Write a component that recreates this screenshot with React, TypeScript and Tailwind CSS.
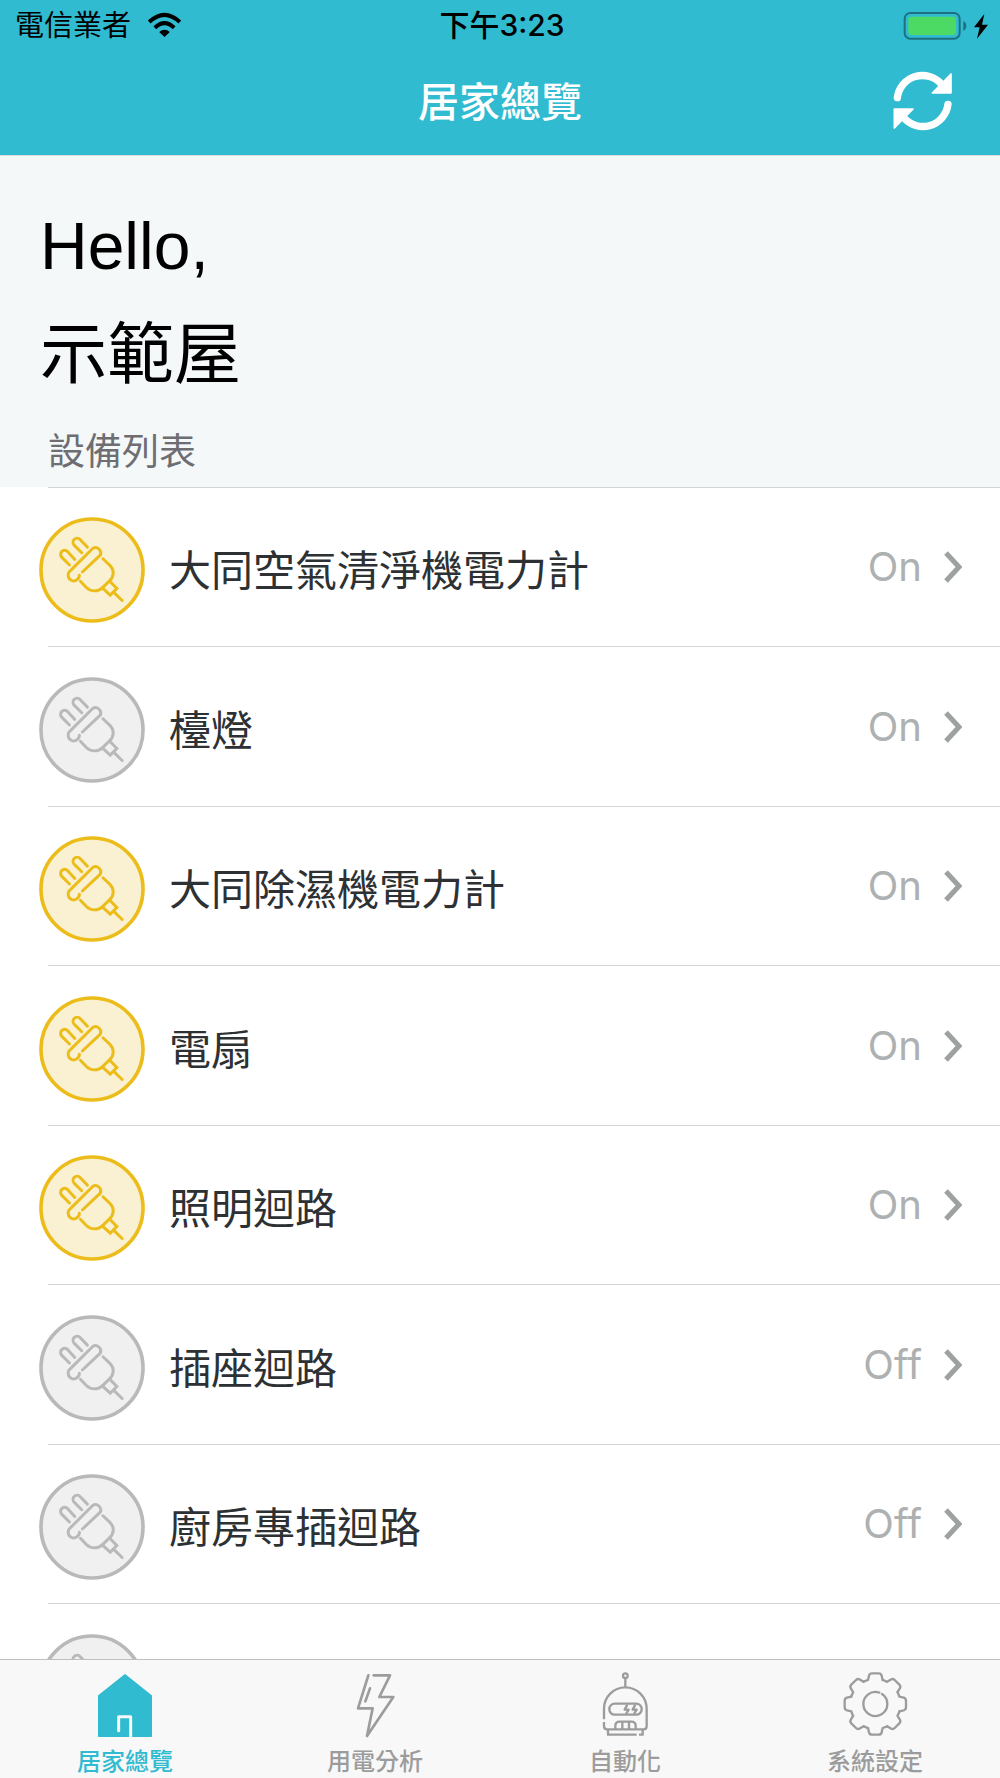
import type { ReactNode } from 'react';

type Device = {
  name: string;
  status?: 'On' | 'Off';
  active: boolean;
};

const devices: Device[] = [
  { name: '大同空氣清淨機電力計', status: 'On', active: true },
  { name: '檯燈', status: 'On', active: false },
  { name: '大同除濕機電力計', status: 'On', active: true },
  { name: '電扇', status: 'On', active: true },
  { name: '照明迴路', status: 'On', active: true },
  { name: '插座迴路', status: 'Off', active: false },
  { name: '廚房專插迴路', status: 'Off', active: false },
  { name: '', active: false },
];

function WifiIcon() {
  return (
    <svg viewBox="441 33 104 78" className="h-[26px] w-[35px]" fill="none" stroke="black" strokeWidth="12">
      <path d="M447 63Q493 20 539 63" />
      <path d="M464 80Q493 53 522 80" />
      <path d="M477 93Q493 80 509 93L493 108Z" fill="black" stroke="none" />
    </svg>
  );
}

function BatteryIcon() {
  return (
    <svg viewBox="1208 28 258 87" className="h-[29px] w-[86px]">
      <rect x="1213" y="34" width="165" height="77" rx="17" fill="none" stroke="#1c7180" strokeWidth="6" />
      <rect x="1224" y="45" width="143" height="55" rx="9" fill="#4cd964" />
      <path d="M1389 58Q1398 63 1398 73T1389 88Z" fill="#1c7180" />
      <path d="M1452 37L1421 77H1438L1430 111L1463 69H1445Z" />
    </svg>
  );
}

function RefreshIcon() {
  return (
    <svg viewBox="36 60 186 186" className="size-[62px]" fill="none" stroke="white" strokeWidth="22" strokeLinecap="round">
      <path d="M52 143A76 76 0 0 1 185 103" />
      <path d="M204 163A76 76 0 0 1 71 203" />
      <path d="M213 72V129H157Z" fill="white" strokeWidth="5" strokeLinejoin="round" />
      <path d="M43 234V177H99Z" fill="white" strokeWidth="5" strokeLinejoin="round" />
    </svg>
  );
}

function PlugIcon({ active }: { active: boolean }) {
  return (
    <svg
      viewBox="56 50 320 320"
      className={active ? 'size-[106px] text-[#ecbd1a]' : 'size-[106px] text-[#b9b9b9]'}
      fill="none"
      stroke="currentColor"
      strokeWidth="9"
      strokeLinecap="round"
      strokeLinejoin="round"
    >
      <circle cx="216" cy="210" r="154" strokeWidth="11" fill={active ? '#faf1d3' : '#f0f0f0'} />
      <path d="M185 158L162 135A12 12 0 0 1 180 118L202 141" />
      <path d="M148 195L125 172A12 12 0 0 1 142 154L164 178" />
      <path d="M178 226A17 17 0 1 1 151 212L218 145A16 16 0 0 1 241 165L187 216" />
      <path d="M249 176L271 197Q281 208 280 220Q279 234 269 243L247 264Q238 273 223 273Q209 273 199 263L181 244" />
      <path d="M247 264L271 286L291 266L269 243" strokeLinejoin="miter" />
      <path d="M284 280L307 302" />
    </svg>
  );
}

function ChevronIcon() {
  return (
    <svg viewBox="0 0 18 32" className="h-8 w-[18px]" fill="none" stroke="#9da1a1" strokeWidth="5">
      <path d="M2 2L15 16L2 30" />
    </svg>
  );
}

function TabIcon({ children }: { children: ReactNode }) {
  return (
    <svg
      viewBox="0 0 201 201"
      className="size-[67px]"
      fill="none"
      stroke="currentColor"
      strokeWidth="8"
      strokeLinecap="round"
      strokeLinejoin="round"
    >
      {children}
    </svg>
  );
}

function HomeIcon() {
  return (
    <TabIcon>
      <path d="M99 11L178 74V196H20V74Z" fill="currentColor" strokeWidth="4" />
      <path d="M80 179V137H116V200" stroke="#f7f7f7" strokeWidth="9" />
    </TabIcon>
  );
}

function BoltIcon() {
  return (
    <TabIcon>
      <path d="M95 13H144L112 78H154L75 195L92 112H48L79 13" />
      <path d="M84 52L70 91" />
    </TabIcon>
  );
}

function RobotIcon() {
  return (
    <TabIcon>
      <g strokeWidth="7" strokeLinecap="butt">
        <circle cx="100" cy="14" r="7" />
        <path d="M100 22V48" />
        <path d="M36 145V113A64 64 0 0 1 164 113V166Q164 175 155 175H45Q36 175 36 166V153" />
        <rect x="52" y="98" width="97" height="33" rx="16" />
        <path d="M106 101L98 116H110L102 129M130 101L122 116H134L126 129" />
        <path d="M70 175V165Q70 152 83 152H118Q131 152 131 165V175M91 152V175M111 152V175" />
        <path d="M48 175V191H134M141 191H152V175" />
      </g>
    </TabIcon>
  );
}

function GearIcon() {
  const teeth = [0, 45, 90, 135, 180, 225, 270, 315];
  return (
    <TabIcon>
      <g transform="translate(100 99)" strokeWidth="7">
        {teeth.map((angle) => (
          <path
            key={angle}
            transform={`rotate(${angle})`}
            d="M-36 -67L-22 -72L-19 -85Q-17 -92 -10 -92H10Q17 -92 19 -85L22 -72"
          />
        ))}
        <path d="M20 -30A36 36 0 1 1 12 -34" />
      </g>
    </TabIcon>
  );
}

const tabs = [
  { label: '居家總覽', icon: <HomeIcon />, current: true },
  { label: '用電分析', icon: <BoltIcon />, current: false },
  { label: '自動化', icon: <RobotIcon />, current: false },
  { label: '系統設定', icon: <GearIcon />, current: false },
];

export default function App() {
  return (
    <div className="flex h-screen flex-col bg-white font-['Inter','Noto_Sans_CJK_TC',sans-serif] text-black" lang="zh-Hant">
      <header className="shrink-0 border-b border-[#dcdcdc] bg-[#30bbd1]">
        {/* Status bar */}
        <div className="grid h-[50px] grid-cols-3 items-center pr-[11px] pl-[15px] text-[29px] leading-none">
          <div className="flex items-center gap-4">
            <span>電信業者</span>
            <WifiIcon />
          </div>
          <span className="text-center text-[30px] font-medium">下午3:23</span>
          <div className="flex justify-end">
            <BatteryIcon />
          </div>
        </div>

        <div className="grid h-[105px] grid-cols-[1fr_auto_1fr] items-center px-[46px]">
          <span />
          <h1 className="text-[41px] font-medium text-white">居家總覽</h1>
          <button type="button" aria-label="重新整理" className="justify-self-end pb-1">
            <RefreshIcon />
          </button>
        </div>
      </header>

      <main className="min-h-0 flex-1 overflow-hidden">
        <section className="bg-[#f4f8f9] px-10 pt-9">
          <p className="font-['Liberation_Sans',sans-serif] text-[66px] leading-[108px]">Hello,</p>
          <p className="text-[67px] leading-[108px]">示範屋</p>
          <h2 className="pt-2.5 pb-px pl-2 text-[37px] leading-[68px] text-[#6d6d72]">設備列表</h2>
        </section>

        <ul>
          {devices.map((device, index) => (
            <li key={index} className="flex h-[159px] flex-col even:h-40">
              <div className="ml-12 h-px shrink-0 bg-[#d3d4d6]" />
              <a href="#" className="flex flex-1 items-center pr-[38px] pl-[39px]">
                <span className="pt-1.5">
                  <PlugIcon active={device.active} />
                </span>
                <span className="flex-1 pt-2 pl-6 text-[42px] leading-none text-[#2d3134]">{device.name}</span>
                {device.status && (
                  <span className="pr-[22px] text-[40px] leading-none text-[#adb1b1]">{device.status}</span>
                )}
                <ChevronIcon />
              </a>
            </li>
          ))}
        </ul>
      </main>

      <nav className="grid h-[119px] shrink-0 grid-cols-4 border-t border-[#bfbfc1] bg-[#f8f8f8]">
        {tabs.map((tab) => (
          <a
            key={tab.label}
            href="#"
            className={
              tab.current
                ? 'flex flex-col items-center pt-[11px] text-[#30bbd1]'
                : 'flex flex-col items-center pt-[11px] text-[#9c9c9c]'
            }
          >
            {tab.icon}
            <span className="pt-2.5 text-2xl leading-7 font-medium">{tab.label}</span>
          </a>
        ))}
      </nav>
    </div>
  );
}
